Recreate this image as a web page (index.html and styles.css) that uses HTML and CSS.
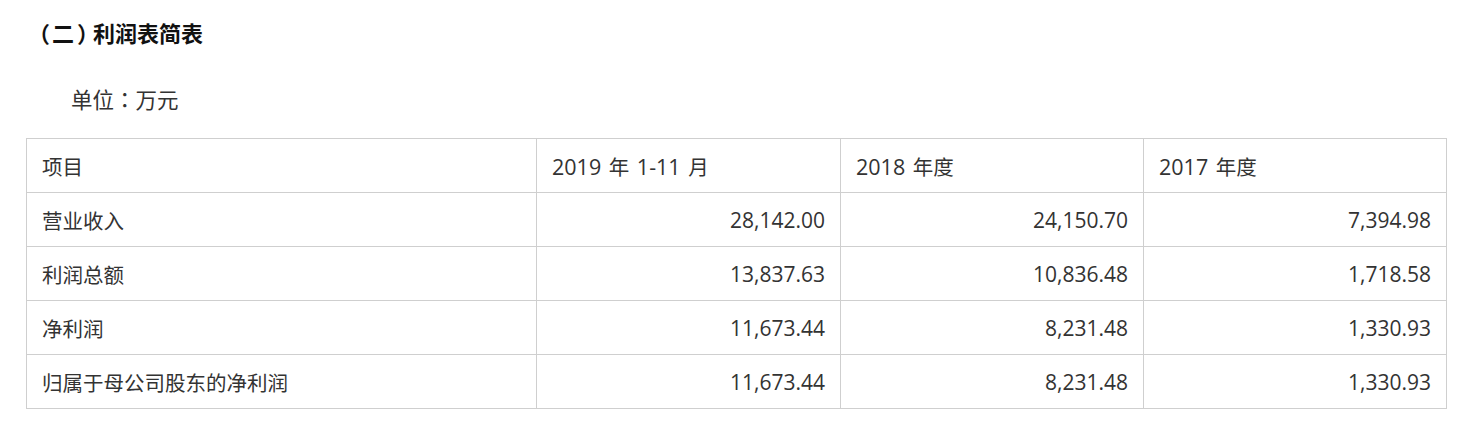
FILE: index.html
```html
<!DOCTYPE html>
<html lang="zh-CN">
<head>
<meta charset="utf-8">
<title>利润表简表</title>
<link rel="stylesheet" href="styles.css">
</head>
<body>
<div class="page">
  <h2 class="title"><span class="lp">（</span>二<span class="rp">）</span>利润表简表</h2>
  <p class="unit">单位<span class="punct" lang="zh-Hant-TW">：</span>万元</p>
  <table class="report">
    <colgroup>
      <col class="c1"><col class="c2"><col class="c3"><col class="c4">
    </colgroup>
    <thead>
      <tr>
        <th class="label">项目</th>
        <th>2019 <span class="cjk">年</span> 1-11 <span class="cjk">月</span></th>
        <th>2018 <span class="cjk">年度</span></th>
        <th>2017 <span class="cjk">年度</span></th>
      </tr>
    </thead>
    <tbody>
      <tr><td class="label">营业收入</td><td class="num">28,142.00</td><td class="num">24,150.70</td><td class="num">7,394.98</td></tr>
      <tr><td class="label">利润总额</td><td class="num">13,837.63</td><td class="num">10,836.48</td><td class="num">1,718.58</td></tr>
      <tr><td class="label">净利润</td><td class="num">11,673.44</td><td class="num">8,231.48</td><td class="num">1,330.93</td></tr>
      <tr><td class="label">归属于母公司股东的净利润</td><td class="num">11,673.44</td><td class="num">8,231.48</td><td class="num">1,330.93</td></tr>
    </tbody>
  </table>
</div>
</body>
</html>
```

FILE: styles.css
```css
html, body {
  margin: 0;
  padding: 0;
  background: #fff;
}
body {
  font-family: "Open Sans", "Noto Sans CJK SC", sans-serif;
  color: #333;
}
.page {
  padding: 18px 28px 0 26px;
}
.punct {
  font-family: "Noto Sans CJK TC", "Noto Sans CJK SC", sans-serif;
  line-height: 1;
}
.title {
  margin: 0;
  height: 30px;
  font-size: 22px;
  line-height: 30px;
  font-weight: bold;
  color: #111;
}
.lp {
  margin: 0 2px 0 2px;
}
.rp {
  margin-left: 3px;
  letter-spacing: -6px;
}
.unit {
  margin: 37px 0 0 0;
  height: 30px;
  font-size: 21.5px;
  line-height: 30px;
  text-indent: 45px;
  color: #333;
}
.report {
  margin-top: 23px;
  width: 1420px;
  border-collapse: collapse;
  table-layout: fixed;
  font-size: 21px;
}
.c1 { width: 510px; }
.c2 { width: 304px; }
.c3 { width: 303px; }
.c4 { width: 303px; }
.report th, .report td {
  border: 1px solid #cfcfcf;
  height: 53px;
  padding: 0 15px;
  text-align: left;
  font-weight: normal;
  color: #333;
  vertical-align: middle;
  white-space: nowrap;
}
.report th {
  font-size: 21.5px;
  word-spacing: 2px;
}
.report .label {
  font-size: 20.5px;
}
.report .cjk {
  font-size: 20.5px;
}
.report td.num {
  text-align: right;
}
```
